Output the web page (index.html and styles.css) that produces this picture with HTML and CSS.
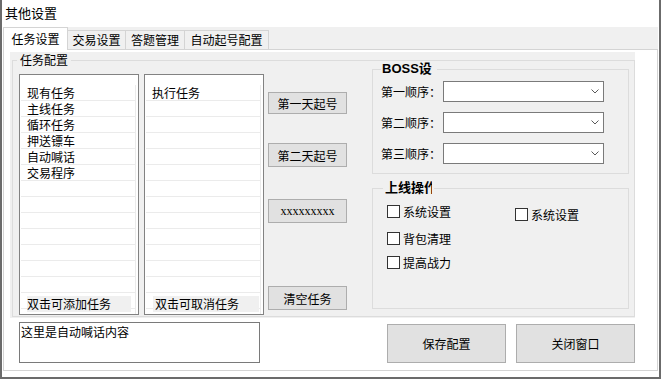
FILE: index.html
```html
<!DOCTYPE html>
<html lang="zh-CN">
<head>
  <meta charset="utf-8">
  <title>其他设置</title>
  <link rel="stylesheet" href="styles.css">
</head>
<body>

  <div class="window">
    <div class="title">其他设置</div>

    <!-- tab headers -->
    <div class="tabs">
      <div class="tab tab-active tab-w1">任务设置</div>
      <div class="tab tab-w2">交易设置</div>
      <div class="tab tab-w3">答题管理</div>
      <div class="tab tab-w4">自动起号配置</div>
    </div>

    <div class="page">
      <div class="panel">
        <fieldset class="group main-group">
          <legend>任务配置</legend>
          <div class="main-body">

            <!-- available tasks -->
            <div class="list">
              <div class="rows">
                <div class="item">现有任务</div>
                <div class="item">主线任务</div>
                <div class="item">循环任务</div>
                <div class="item">押送镖车</div>
                <div class="item">自动喊话</div>
                <div class="item">交易程序</div>
              </div>
              <div class="list-hint">双击可添加任务</div>
            </div>

            <!-- running tasks -->
            <div class="list list-exec">
              <div class="rows">
                <div class="item">执行任务</div>
              </div>
              <div class="list-hint list-hint-right">双击可取消任务</div>
            </div>

            <div class="actions">
              <button class="btn btn-first">第一天起号</button>
              <button class="btn btn-second">第二天起号</button>
              <button class="btn btn-third btn-x">xxxxxxxxx</button>
              <button class="btn btn-last">清空任务</button>
            </div>

            <div class="side">
              <fieldset class="group boss">
                <legend class="legend-bold">BOSS设</legend>
                <div class="boss-body">
                  <div class="boss-row">
                    <span class="boss-label">第一顺序：</span>
                    <div class="combo"><svg width="8" height="5" viewBox="0 0 8 5"><path d="M0.5 0.5 L4 4 L7.5 0.5" fill="none" stroke="#5a5a5a"/></svg></div>
                  </div>
                  <div class="boss-row">
                    <span class="boss-label">第二顺序：</span>
                    <div class="combo"><svg width="8" height="5" viewBox="0 0 8 5"><path d="M0.5 0.5 L4 4 L7.5 0.5" fill="none" stroke="#5a5a5a"/></svg></div>
                  </div>
                  <div class="boss-row">
                    <span class="boss-label">第三顺序：</span>
                    <div class="combo"><svg width="8" height="5" viewBox="0 0 8 5"><path d="M0.5 0.5 L4 4 L7.5 0.5" fill="none" stroke="#5a5a5a"/></svg></div>
                  </div>
                </div>
              </fieldset>

              <fieldset class="group online">
                <legend class="legend-bold legend-clip"><span>上线操作</span></legend>
                <div class="checks">
                  <div class="check-row">
                    <label class="check check-wide"><input type="checkbox">系统设置</label>
                    <label class="check check-low"><input type="checkbox">系统设置</label>
                  </div>
                  <label class="check"><input type="checkbox">背包清理</label>
                  <label class="check"><input type="checkbox">提高战力</label>
                </div>
              </fieldset>
            </div>

          </div>
        </fieldset>
      </div>

      <div class="bottom">
        <textarea class="shout" readonly>这里是自动喊话内容</textarea>
        <button class="btn btn-big btn-save">保存配置</button>
        <button class="btn btn-big btn-close">关闭窗口</button>
      </div>
    </div>
  </div>

</body>
</html>
```

FILE: styles.css
```css
/* window frame */
body {
  margin: 0;
  background: #fff;
  font-family: "Noto Sans CJK SC", "Liberation Sans", sans-serif;
  font-size: 12px;
  color: #000;
}

.window {
  width: 661px;
  height: 379px;
  box-sizing: border-box;
  border: 2px solid #6b6b6b;
  border-top: 0;
  background: #fff;
}

.title {
  height: 27px;
  line-height: 26px;
  padding-left: 3px;
  font-size: 13px;
}

/* tabs */
.tabs {
  display: flex;
  align-items: flex-end;
  height: 22px;
  margin: 0 1px;
  background: #f0f0f0;
}

.tab {
  box-sizing: border-box;
  height: 19px;
  margin-left: -1px;
  border: 1px solid #d4d4d4;
  border-bottom: 0;
  background: #f0f0f0;
  text-align: center;
  line-height: 18px;
}

.tab-active {
  position: relative;
  z-index: 1;
  height: 23px;
  margin: 0 0 -1px 0;
  padding-top: 2px;
  background: #fff;
}

.tab-w1 { width: 65px; }
.tab-w2 { width: 59px; }
.tab-w3 { width: 60px; }
.tab-w4 { width: 85px; }

.page {
  box-sizing: border-box;
  height: 322px;
  margin: 0 1px;
  border: 1px solid #d4d4d4;
  background: #fff;
}

.panel {
  box-sizing: border-box;
  width: 625px;
  height: 266px;
  margin: 2px 0 0 6px;
  padding: 1px 0 0 2px;
  background: #f0f0f0;
}

/* group boxes */
.group {
  margin: 0;
  padding: 0;
  min-width: 0;
  border: 1px solid #dcdcdc;
}

.group legend {
  margin-left: 4px;
  padding: 0 3px;
  line-height: 14px;
}

.main-group {
  box-sizing: border-box;
  width: 623px;
}

.main-body {
  display: flex;
  align-items: flex-start;
  padding: 7px 0 1px 6px;
}

/* list boxes */
.list {
  position: relative;
  box-sizing: border-box;
  width: 120px;
  height: 241px;
  margin-right: 5px;
  padding: 10px 2px 0 1px;
  border: 1px solid #828282;
  background: #fff;
}

.list-exec {
  margin-right: 4px;
}

.rows {
  height: 100%;
  border-right: 1px solid #ebebeb;
  background-image: linear-gradient(to bottom, transparent 15px, #ebebeb 15px);
  background-size: 100% 16px;
}

.item {
  height: 16px;
  line-height: 16px;
  padding-left: 6px;
}

.list-hint {
  position: absolute;
  left: 7px;
  top: 221px;
  width: 104px;
  height: 16px;
  line-height: 16px;
  background: #f0f0f0;
}

.list-hint-right {
  left: 8px;
  width: 104px;
  padding-left: 2px;
}

/* buttons */
.btn {
  box-sizing: border-box;
  padding: 0;
  border: 1px solid #adadad;
  background: #e1e1e1;
  font: inherit;
  color: #000;
}

.actions {
  display: flex;
  flex-direction: column;
  box-sizing: border-box;
  width: 79px;
  height: 241px;
  margin-right: 25px;
  padding-bottom: 5px;
}

.actions .btn {
  width: 79px;
  height: 24px;
}

.actions .btn-first {
  height: 22px;
  margin-top: 18px;
}

.btn-second { margin-top: 29px; }
.btn-third { margin-top: 32px; }
.btn-last { margin-top: auto; }

.btn-x {
  font-family: "Liberation Serif", serif;
}

/* right side */
.side {
  width: 257px;
  margin-top: -12px;
}

.legend-bold {
  font: bold 13px "Liberation Sans", "Noto Sans CJK SC", sans-serif;
}

.group .legend-clip span {
  display: inline-block;
  vertical-align: top;
  height: 14px;
  overflow: hidden;
  white-space: nowrap;
}

.boss legend {
  margin-left: 8px;
  padding: 0 5px 0 1px;
}

.boss-body {
  display: flex;
  flex-direction: column;
  gap: 10px;
  padding: 5px 0 9px 8px;
}

.boss-row {
  display: flex;
  align-items: center;
  height: 21px;
}

.boss-label {
  width: 62px;
}

.combo {
  display: flex;
  align-items: center;
  justify-content: flex-end;
  box-sizing: border-box;
  width: 161px;
  height: 21px;
  padding-right: 4px;
  border: 1px solid #7a7a7a;
  background: #fff;
}

.online {
  margin-top: 7px;
}

.online legend {
  margin-left: 10px;
  padding: 0 2px;
}

.online legend span { width: 47px; }

.checks {
  display: flex;
  flex-direction: column;
  gap: 11px;
  padding: 10px 0 39px 14px;
}

.check-row {
  display: flex;
  align-items: flex-start;
}

.check {
  display: flex;
  align-items: center;
  height: 13px;
  line-height: 13px;
}

.check-wide { width: 128px; }
.check-low { margin-top: 3px; }

.check input {
  appearance: none;
  box-sizing: border-box;
  width: 13px;
  height: 13px;
  margin: 0 3px 0 0;
  border: 1px solid #333;
  background: #fff;
}

/* bottom row */
.bottom {
  display: flex;
  align-items: flex-start;
}

.shout {
  box-sizing: border-box;
  width: 241px;
  height: 41px;
  margin: 4px 0 0 15px;
  padding: 2px 1px;
  border: 1px solid #7a7a7a;
  font: inherit;
  line-height: 14px;
  resize: none;
  overflow: hidden;
  outline: none;
}

.btn-big {
  width: 119px;
  height: 39px;
  margin-top: 6px;
}

.btn-save { margin-left: auto; }
.btn-close { margin: 6px 22px 0 10px; }
```
